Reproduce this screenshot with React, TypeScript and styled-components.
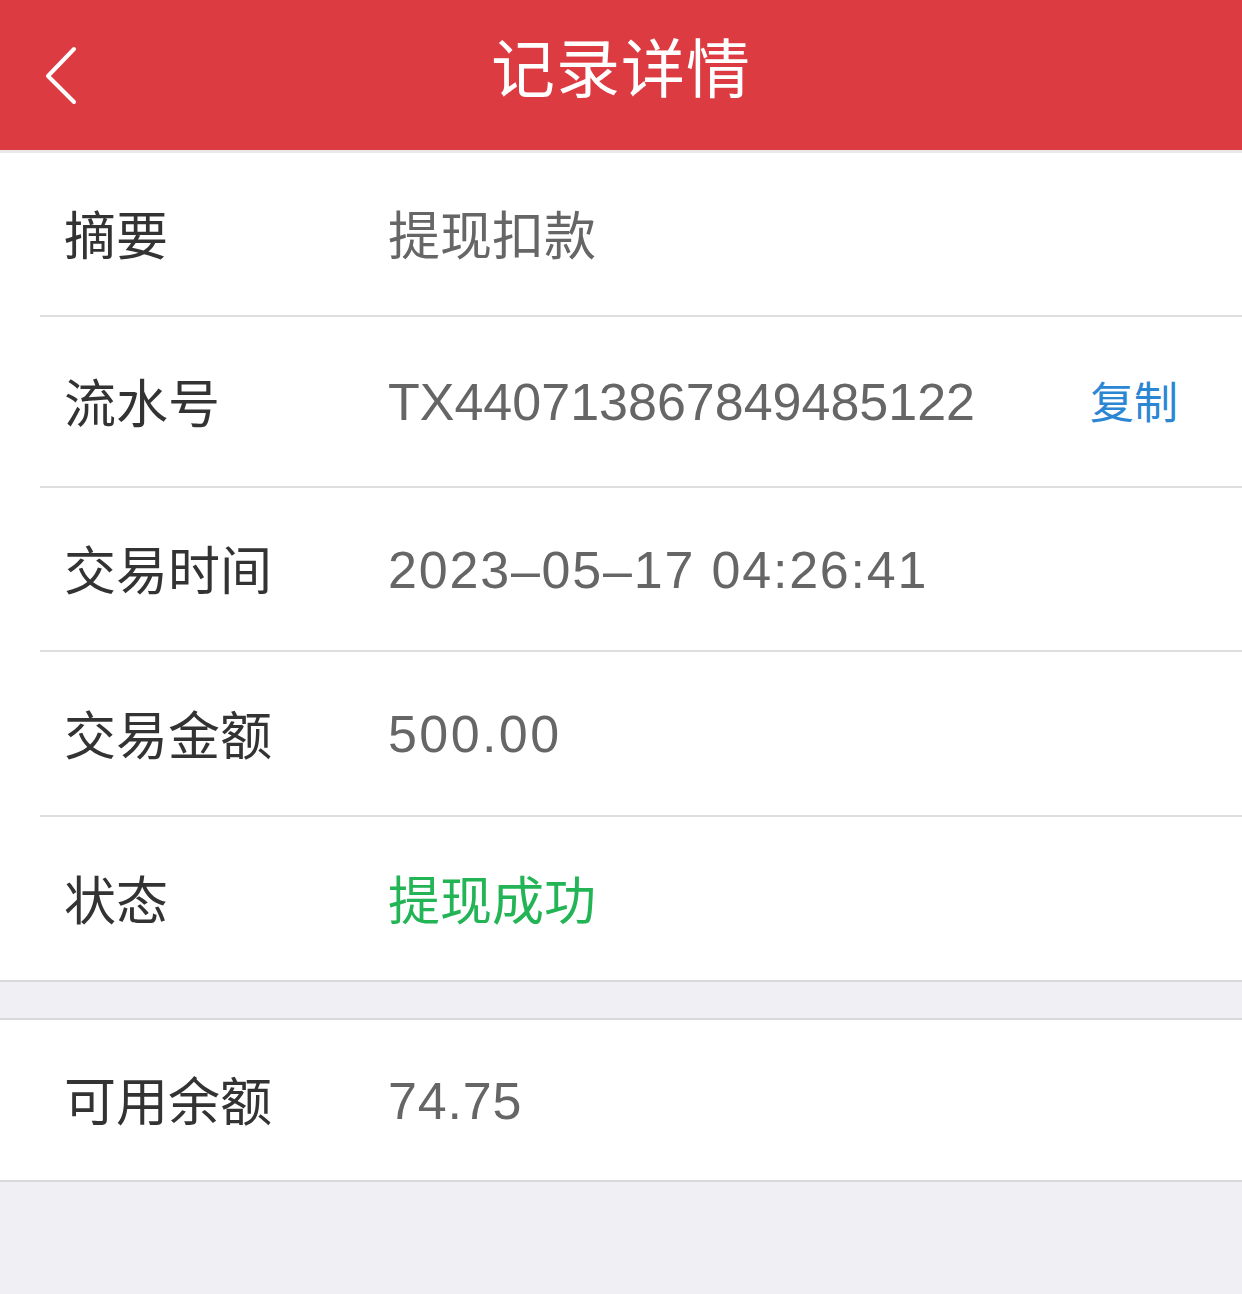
import React from "react";
import styled, { createGlobalStyle } from "styled-components";

const Global = createGlobalStyle`
  html, body { margin: 0; padding: 0; background: #efeff4; }
  body { font-family: "Liberation Sans", "Noto Sans CJK SC", sans-serif; }
  * { box-sizing: border-box; }
`;

const Page = styled.div`
  width: 1242px;
  min-height: 1294px;
  background: #efeff4;
`;

const Header = styled.header`
  height: 153px;
  background: #dc3b42;
  display: flex;
  align-items: center;
  justify-content: center;
  position: relative;
  border-bottom: 3px solid #ebe6e8;
`;

const Back = styled.button`
  position: absolute;
  left: 38px;
  top: 40px;
  width: 48px;
  height: 70px;
  background: none;
  border: none;
  padding: 0;
  display: flex;
  align-items: center;
  justify-content: center;
`;

const Title = styled.h1`
  margin: 0;
  margin-top: -22px;
  color: #fff;
  font-family: "Noto Sans CJK SC", sans-serif;
  font-weight: 400;
  font-size: 64px;
  letter-spacing: 1px;
`;

const Section = styled.section<{ $gap?: boolean }>`
  background: #fff;
  margin-top: ${(p) => (p.$gap ? "36px" : "0")};
  border-top: ${(p) => (p.$gap ? "2px solid #d9d9dc" : "none")};
  border-bottom: 2px solid #d9d9dc;
  padding-left: 40px;
`;

const Row = styled.div<{ $h: number; $last?: boolean }>`
  height: ${(p) => p.$h}px;
  display: flex;
  align-items: center;
  padding-left: 24px;
  padding-right: 64px;
  padding-bottom: 3px;
  border-bottom: ${(p) => (p.$last ? "none" : "2px solid #dedede")};
`;

const Label = styled.div`
  width: 324px;
  flex-shrink: 0;
  color: #333;
  font-family: "Noto Sans CJK SC", sans-serif;
  font-size: 52px;
`;

const Value = styled.div<{ $color?: string; $cjk?: boolean; $track?: number }>`
  flex: 1;
  color: ${(p) => p.$color || "#666"};
  font-family: ${(p) =>
    p.$cjk ? `"Noto Sans CJK SC", sans-serif` : `"Liberation Sans", "Noto Sans CJK SC", sans-serif`};
  font-size: 52px;
  letter-spacing: ${(p) => p.$track ?? 0}px;
  margin-top: ${(p) => (p.$cjk ? "0" : "4px")};
`;

const Copy = styled.span`
  color: #2b86d4;
  font-family: "Noto Sans CJK SC", sans-serif;
  font-size: 44px;
`;

export default function App() {
  return (
    <Page>
      <Global />
      <Header>
        <Back aria-label="返回">
          <svg width="40" height="64" viewBox="0 0 40 64">
            <polyline
              points="32,6 6,33 32,59"
              fill="none"
              stroke="#fff"
              strokeWidth="4"
              strokeLinecap="round"
              strokeLinejoin="round"
            />
          </svg>
        </Back>
        <Title>记录详情</Title>
      </Header>
      <Section>
        <Row $h={164}>
          <Label>摘要</Label>
          <Value $cjk>提现扣款</Value>
        </Row>
        <Row $h={171}>
          <Label>流水号</Label>
          <Value>TX440713867849485122</Value>
          <Copy>复制</Copy>
        </Row>
        <Row $h={164}>
          <Label>交易时间</Label>
          <Value $track={1.8}>2023–05–17 04:26:41</Value>
        </Row>
        <Row $h={165}>
          <Label>交易金额</Label>
          <Value $track={2.4}>500.00</Value>
        </Row>
        <Row $h={163} $last>
          <Label>状态</Label>
          <Value $cjk $color="#22b455">提现成功</Value>
        </Row>
      </Section>
      <Section $gap>
        <Row $h={160} $last>
          <Label>可用余额</Label>
          <Value $track={0.8}>74.75</Value>
        </Row>
      </Section>
    </Page>
  );
}
